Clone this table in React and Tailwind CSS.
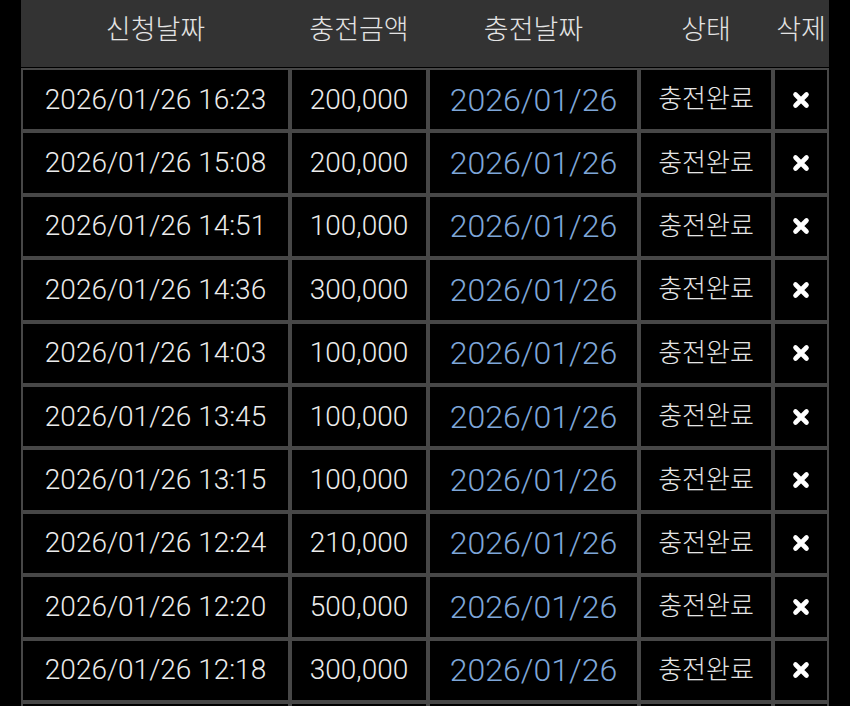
import React from "react";

const rows = [
  { requested: "2026/01/26 16:23", amount: "200,000" },
  { requested: "2026/01/26 15:08", amount: "200,000" },
  { requested: "2026/01/26 14:51", amount: "100,000" },
  { requested: "2026/01/26 14:36", amount: "300,000" },
  { requested: "2026/01/26 14:03", amount: "100,000" },
  { requested: "2026/01/26 13:45", amount: "100,000" },
  { requested: "2026/01/26 13:15", amount: "100,000" },
  { requested: "2026/01/26 12:24", amount: "210,000" },
  { requested: "2026/01/26 12:20", amount: "500,000" },
  { requested: "2026/01/26 12:18", amount: "300,000" },
];

const cols = "grid grid-cols-[265px_134px_207px_130px_52px]";
const cell = "flex h-[59.4px] items-center justify-center bg-black";

function DeleteIcon() {
  return (
    <svg width="18" height="18" viewBox="0 0 18 18" aria-hidden="true">
      <path
        d="M3.5 3.5 L14.5 14.5 M14.5 3.5 L3.5 14.5"
        stroke="#ffffff"
        strokeWidth="4.6"
        strokeLinecap="round"
      />
    </svg>
  );
}

export default function App() {
  return (
    <div
      className="h-[706px] w-[850px] overflow-hidden bg-black pl-[21px] font-light"
      style={{ fontFamily: "Roboto, 'Noto Sans CJK KR', sans-serif" }}
    >
      <div className={`${cols} h-[67px] w-[808px] gap-x-[4px] bg-[#333333] px-[2px] text-[27px] text-[#e4e4e4]`}>
        <div className="flex items-center justify-center pb-[7px]">신청날짜</div>
        <div className="flex items-center justify-center pb-[7px]">충전금액</div>
        <div className="flex items-center justify-center pb-[7px]">충전날짜</div>
        <div className="flex items-center justify-center pb-[7px]">상태</div>
        <div className="flex items-center justify-center pb-[7px]">삭제</div>
      </div>

      <div className={`${cols} mt-[1px] w-[808px] gap-[4px] bg-[#474747] p-[2px]`}>
        {rows.map((row, i) => (
          <React.Fragment key={i}>
            <div className={`${cell} text-[28px] text-[#ececec]`}>{row.requested}</div>
            <div className={`${cell} text-[28px] text-[#ececec]`}>{row.amount}</div>
            <div className={`${cell} text-[32px] text-[#7ea6d8]`}>2026/01/26</div>
            <div className={`${cell} text-[26px] text-[#e4e4e4]`}>충전완료</div>
            <div className={cell}>
              <DeleteIcon />
            </div>
          </React.Fragment>
        ))}
        {/* next row, only its top edge is on screen */}
        <div className={cell} />
        <div className={cell} />
        <div className={cell} />
        <div className={cell} />
        <div className={cell} />
      </div>
    </div>
  );
}
